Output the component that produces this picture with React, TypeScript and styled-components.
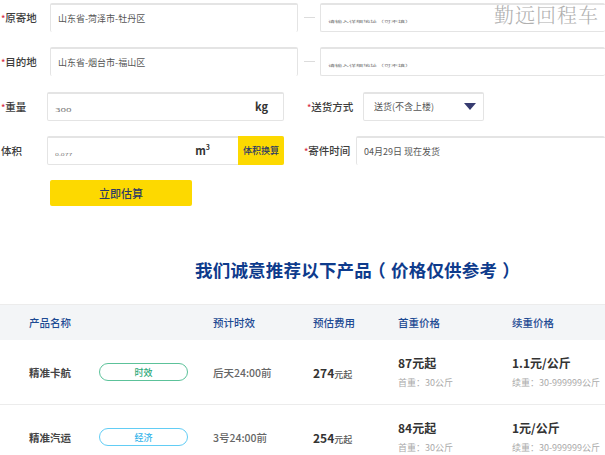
import React from 'react';
import styled, { createGlobalStyle } from 'styled-components';

interface IProduct {
  name: string;
  tag: string;
  tagColor: string;
  tagText: string;
  time: string;
  fee: string;
  first: string;
  firstNote: string;
  next: string;
  nextNote: string;
}

const products: IProduct[] = [
  {
    name: '精准卡航',
    tag: '时效',
    tagColor: '#5cc29a',
    tagText: '#2aa878',
    time: '后天24:00前',
    fee: '274',
    first: '87元起',
    firstNote: '首重：30公斤',
    next: '1.1元/公斤',
    nextNote: '续重：30-999999公斤',
  },
  {
    name: '精准汽运',
    tag: '经济',
    tagColor: '#62cdf5',
    tagText: '#35b4ea',
    time: '3号24:00前',
    fee: '254',
    first: '84元起',
    firstNote: '首重：30公斤',
    next: '1元/公斤',
    nextNote: '续重：30-999999公斤',
  },
];

function App() {
  return (
    <Page>
      <GlobalStyle />
      <Watermark>勤远回程车</Watermark>

      <Form>
        <Row>
          <Label $width={50}>
            <Star>*</Star>原寄地
          </Label>
          <Field $width={248} $open>
            山东省-菏泽市-牡丹区
          </Field>
          <Dash />
          <Field $grow>
            <Tiny>请输入详细地址（可不填）</Tiny>
          </Field>
        </Row>

        <Row>
          <Label $width={50}>
            <Star>*</Star>目的地
          </Label>
          <Field $width={248} $open>
            山东省-烟台市-福山区
          </Field>
          <Dash />
          <Field $grow>
            <Tiny>请输入详细地址（可不填）</Tiny>
          </Field>
        </Row>

        <Row>
          <Label $width={47}>
            <Star>*</Star>重量
          </Label>
          <Field $width={237}>
            <Tiny $size={10}>300</Tiny>
            <Unit>kg</Unit>
          </Field>
          <Label $width={57} $indent={22}>
            <Star>*</Star>送货方式
          </Label>
          <Select>
            送货(不含上楼)
            <Caret />
          </Select>
        </Row>

        <Row>
          <Label $width={47}>体积</Label>
          <Field $width={237} $flush>
            <Tiny>0.077</Tiny>
            <Unit $right={14}>
              m<Sup>3</Sup>
            </Unit>
            <Convert>体积换算</Convert>
          </Field>
          <Label $width={53} $indent={19}>
            <Star>*</Star>寄件时间
          </Label>
          <Field $grow $open>
            04月29日 现在发货
          </Field>
        </Row>

        <Submit>立即估算</Submit>
      </Form>

      <Title>
        我们诚意推荐以下产品<Paren>（</Paren>价格仅供参考<Paren>）</Paren>
      </Title>

      <Table>
        <HeadRow>
          <span>产品名称</span>
          <span />
          <span>预计时效</span>
          <span>预估费用</span>
          <span>首重价格</span>
          <span>续重价格</span>
        </HeadRow>
        {products.map((product) => (
          <BodyRow key={product.name}>
            <Name>{product.name}</Name>
            <Tag $color={product.tagColor} $text={product.tagText}>
              {product.tag}
            </Tag>
            <Time>{product.time}</Time>
            <Fee>
              {product.fee}
              <small>元起</small>
            </Fee>
            <Price>
              <strong>{product.first}</strong>
              <span>{product.firstNote}</span>
            </Price>
            <Price>
              <strong>{product.next}</strong>
              <span>{product.nextNote}</span>
            </Price>
          </BodyRow>
        ))}
      </Table>
    </Page>
  );
}

export default App;

const GlobalStyle = createGlobalStyle`
  html, body {
    margin: 0;
    padding: 0;
    background: #fff;
    overflow: hidden;
  }
  body {
    font-family: "Noto Sans CJK SC", "Liberation Sans", sans-serif;
  }
`;

const Page = styled.div`
  position: relative;
  width: 605px;
  height: 455px;
  overflow: hidden;
  color: #444;
`;

const Watermark = styled.div`
  position: absolute;
  top: 2px;
  left: 494px;
  font-family: "Noto Serif CJK SC", "Noto Sans CJK SC", serif;
  font-size: 20px;
  font-weight: 300;
  line-height: 26px;
  letter-spacing: 1px;
  color: #b0b0b0;
`;

const Form = styled.div`
  display: flex;
  flex-direction: column;
  gap: 15.33px;
  padding-top: 3px;
`;

const Row = styled.div`
  display: flex;
  align-items: stretch;
  height: 29px;
`;

const Label = styled.div<{ $width: number; $indent?: number }>`
  flex: none;
  box-sizing: border-box;
  width: ${(p) => p.$width + (p.$indent ?? 0)}px;
  padding-left: ${(p) => (p.$indent ?? 0) + 1}px;
  font-size: 10.5px;
  font-weight: 500;
  line-height: 30px;
  white-space: nowrap;
  color: #3d3d3d;
`;

const Star = styled.span`
  color: #d8304a;
  font-size: 9px;
`;

const Field = styled.div<{ $width?: number; $grow?: boolean; $open?: boolean; $flush?: boolean }>`
  position: relative;
  box-sizing: border-box;
  flex: ${(p) => (p.$grow ? '1' : 'none')};
  width: ${(p) => (p.$width ? `${p.$width}px` : 'auto')};
  padding-left: 7px;
  border: 1px solid #e4e4e4;
  border-top-width: 2px;
  border-bottom: ${(p) => (p.$open ? 'none' : '1px solid #e4e4e4')};
  border-right: ${(p) => (p.$grow ? 'none' : '1px solid #e4e4e4')};
  border-radius: 2px;
  font-size: 9px;
  line-height: 27px;
  white-space: nowrap;
  color: #555;
`;

const Tiny = styled.span<{ $size?: number }>`
  position: absolute;
  left: 7px;
  bottom: 6px;
  font-size: ${(p) => p.$size ?? 7}px;
  line-height: 8px;
  color: #777;
  transform: scaleY(0.5);
`;

const Dash = styled.div`
  flex: none;
  align-self: center;
  width: 11px;
  height: 1px;
  margin: 0 5px 0 6px;
  background: #dcdcdc;
`;

const Unit = styled.span<{ $right?: number }>`
  position: absolute;
  top: 2px;
  right: ${(p) => (p.$right ? p.$right + 59 : 15)}px;
  font-size: 11px;
  font-weight: 700;
  line-height: 20px;
  color: #333;
`;

const Sup = styled.sup`
  font-size: 7px;
  line-height: 0;
`;

const Convert = styled.div`
  position: absolute;
  top: -2px;
  right: -1px;
  bottom: -1px;
  width: 46px;
  border-radius: 0 2px 2px 0;
  background: #fdd900;
  font-size: 9px;
  font-weight: 500;
  line-height: 30px;
  text-align: center;
  color: #2c3a66;
`;

const Select = styled.div`
  display: flex;
  flex: none;
  align-items: center;
  justify-content: space-between;
  box-sizing: border-box;
  width: 121px;
  padding: 0 7px 0 10px;
  border: 1px solid #e4e4e4;
  border-top-width: 2px;
  border-radius: 2px;
  font-size: 9px;
  color: #555;
`;

const Caret = styled.i`
  width: 0;
  height: 0;
  border-top: 7px solid #363b70;
  border-left: 6.5px solid transparent;
  border-right: 6.5px solid transparent;
`;

const Submit = styled.button`
  width: 142px;
  height: 26px;
  margin-left: 50px;
  padding: 0;
  border: none;
  border-radius: 2px;
  background: #fdd900;
  font-family: inherit;
  font-size: 11px;
  font-weight: 500;
  color: #2c3a66;
`;

const Title = styled.h2`
  margin: 51px 0 0;
  padding-left: 195px;
  font-size: 17.5px;
  font-weight: 700;
  line-height: 26px;
  letter-spacing: 0.2px;
  white-space: nowrap;
  color: #0e3b8c;
`;

const Paren = styled.span`
  display: inline-block;
  width: 19px;
  font-feature-settings: "halt";
  text-align: center;
`;

const Table = styled.div`
  margin-top: 21px;
`;

const columns = '70px 114px 100px 85px 114px 1fr';

const HeadRow = styled.div`
  display: grid;
  grid-template-columns: ${columns};
  align-items: center;
  box-sizing: border-box;
  height: 36px;
  padding-left: 29px;
  border-top: 1px solid #ececec;
  background: #f3f5f7;
  font-size: 10.5px;
  font-weight: 500;
  color: #1d4a93;
`;

const BodyRow = styled.div`
  display: grid;
  grid-template-columns: ${columns};
  align-items: center;
  box-sizing: border-box;
  height: 65px;
  padding-left: 29px;
  border-bottom: 1px solid #ececec;
`;

const Name = styled.div`
  font-size: 10.5px;
  font-weight: 700;
  color: #444;
`;

const Tag = styled.div<{ $color: string; $text: string }>`
  box-sizing: border-box;
  width: 89px;
  height: 18px;
  border: 1px solid ${(p) => p.$color};
  border-radius: 9px;
  font-size: 9px;
  font-weight: 500;
  line-height: 17px;
  text-align: center;
  color: ${(p) => p.$text};
`;

const Time = styled.div`
  font-size: 10.5px;
  font-weight: 500;
  color: #666;
`;

const Fee = styled.div`
  font-size: 12px;
  font-weight: 700;
  color: #333;

  small {
    font-size: 9px;
    font-weight: 500;
    color: #555;
  }
`;

const Price = styled.div`
  display: flex;
  flex-direction: column;
  gap: 5px;

  strong {
    font-size: 12px;
    font-weight: 700;
    line-height: 16px;
    color: #333;
  }

  span {
    font-size: 9px;
    line-height: 13px;
    white-space: nowrap;
    color: #aaa;
  }
`;
